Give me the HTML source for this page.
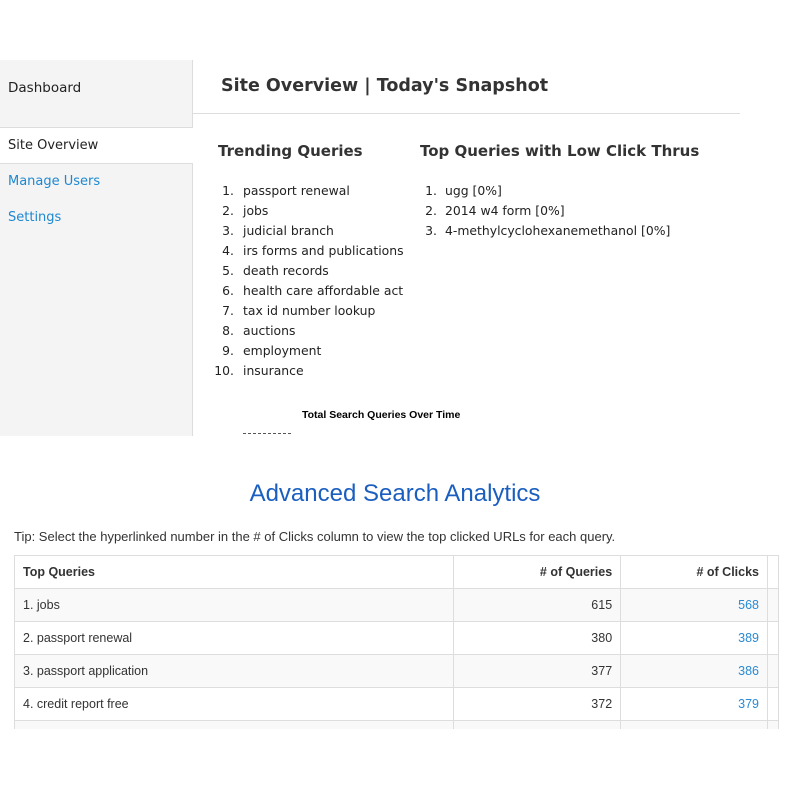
<!DOCTYPE html>
<html><head><meta charset="utf-8">
<style>
*{margin:0;padding:0;box-sizing:border-box}
body{width:800px;height:800px;background:#fff;position:relative;font-family:"DejaVu Sans","Liberation Sans",sans-serif;color:#222;overflow:hidden}
.abs{position:absolute;white-space:nowrap}
#side{left:0;top:60px;width:193px;height:376px;background:#f4f4f4;border-right:1px solid #ddd}
.nav{font-size:13px}
.ol{font-size:12.4px;line-height:20px}
#tbl{left:14px;top:555px;width:765px;border-collapse:collapse;font-family:"Liberation Sans Narrow","Liberation Sans",sans-serif;font-stretch:condensed;font-size:12.5px;color:#333}
#tbl td{border:1px solid #ddd;height:33px;padding:0 8px;vertical-align:middle}
#tbl th{border:1px solid #ddd;height:33px;padding:0 8px;font-weight:bold;text-align:left}
.r{text-align:right!important}
.g td{background:#f9f9f9}
a{color:#2a8ad4;text-decoration:none}
</style></head><body>
<div class="abs" id="side"></div>
<div class="abs" style="left:0;top:127px;width:193px;height:37px;background:#fff;border-top:1px solid #ddd;border-bottom:1px solid #ddd"></div>
<div class="abs nav" style="left:8px;top:80px;color:#222;font-size:13.5px">Dashboard</div>
<div class="abs nav" style="left:8px;top:138px;color:#222">Site Overview</div>
<div class="abs nav" style="left:8px;top:174px;color:#1e88d0">Manage Users</div>
<div class="abs nav" style="left:8px;top:210px;color:#1e88d0">Settings</div>
<div class="abs" style="left:221px;top:76px;font-size:17.5px;font-weight:bold;color:#333">Site Overview | Today's Snapshot</div>
<div class="abs" style="left:193px;top:113px;width:547px;height:1px;background:#ddd"></div>
<div class="abs" style="left:218px;top:142px;font-size:15px;font-weight:bold;color:#333">Trending Queries</div>
<div class="abs" style="left:420px;top:142px;font-size:15px;font-weight:bold;color:#333">Top Queries with Low Click Thrus</div>
<div class="abs ol" style="left:243px;top:181px">
<div>passport renewal</div><div>jobs</div><div>judicial branch</div><div>irs forms and publications</div><div>death records</div><div>health care affordable act</div><div>tax id number lookup</div><div>auctions</div><div>employment</div><div>insurance</div>
</div>
<div class="abs ol" style="left:200px;top:181px;width:34px;text-align:right">
<div>1.</div><div>2.</div><div>3.</div><div>4.</div><div>5.</div><div>6.</div><div>7.</div><div>8.</div><div>9.</div><div>10.</div>
</div>
<div class="abs ol" style="left:445px;top:181px"><div>ugg [0%]</div><div>2014 w4 form [0%]</div><div>4-methylcyclohexanemethanol [0%]</div></div>
<div class="abs ol" style="left:400px;top:181px;width:37px;text-align:right"><div>1.</div><div>2.</div><div>3.</div></div>
<div class="abs" style="left:302px;top:409px;font-family:'Liberation Sans',sans-serif;font-size:10.5px;font-weight:bold;color:#000">Total Search Queries Over Time</div>
<div class="abs" style="left:243px;top:433px;width:48px;height:4px;border-top:1px dashed #555"></div>
<div class="abs" style="left:0;top:436px;width:800px;height:20px;background:#fff"></div>
<div class="abs" style="left:0;top:480px;width:790px;text-align:center;font-family:'Liberation Sans Narrow','Liberation Sans',sans-serif;font-size:24px;color:#1a5fc0">Advanced Search Analytics</div>
<div class="abs" style="left:14px;top:529px;font-family:'Liberation Sans Narrow','Liberation Sans',sans-serif;font-size:13px;color:#333">Tip: Select the hyperlinked number in the # of Clicks column to view the top clicked URLs for each query.</div>
<div class="abs" style="left:14px;top:555px;width:765px;height:174px;overflow:hidden">
<table id="tbl" style="position:static">
<tr><th style="width:440px">Top Queries</th><th class="r" style="width:167px"># of Queries</th><th class="r" style="width:147px"># of Clicks</th><th style="width:11px;padding:0"></th></tr>
<tr class="g"><td>1. jobs</td><td class="r">615</td><td class="r"><a>568</a></td><td style="padding:0"></td></tr>
<tr><td>2. passport renewal</td><td class="r">380</td><td class="r"><a>389</a></td><td style="padding:0"></td></tr>
<tr class="g"><td>3. passport application</td><td class="r">377</td><td class="r"><a>386</a></td><td style="padding:0"></td></tr>
<tr><td>4. credit report free</td><td class="r">372</td><td class="r"><a>379</a></td><td style="padding:0"></td></tr>
<tr class="g"><td>&nbsp;</td><td></td><td></td><td style="padding:0"></td></tr>
</table>
</div>
</body></html>
